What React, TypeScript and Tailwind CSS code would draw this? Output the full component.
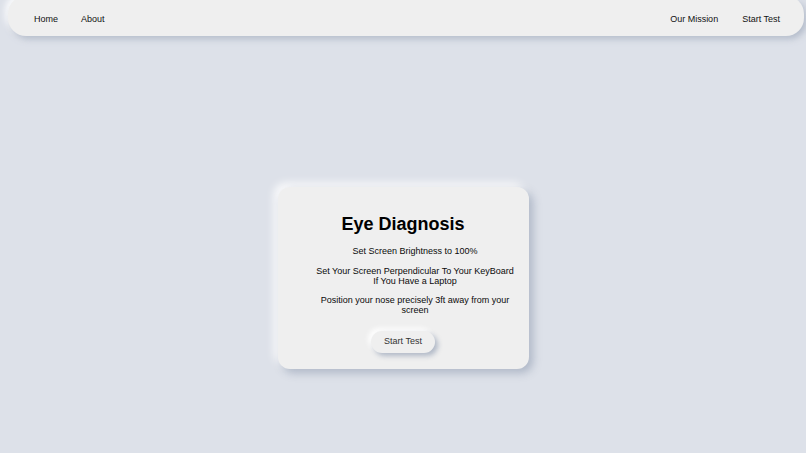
import React from "react";

const NavLink = ({ label }: { label: string }) => (
  <a href="#" className="text-[9px] text-[#111] leading-none">
    {label}
  </a>
);

export default function App() {
  return (
    <div
      className="min-h-screen w-full bg-[#dde1e9] flex flex-col"
      style={{ fontFamily: '"Liberation Sans", Arial, sans-serif' }}
    >
      {/* ナビ */}
      <nav className="ml-[8px] mr-[2px] h-[40px] -mt-[4px] pt-[6px] rounded-[18px] bg-[#efefef] flex items-center justify-between pl-[26px] pr-[24px] shadow-[3px_3px_6px_rgba(163,172,190,0.7),-3px_-3px_6px_rgba(255,255,255,0.9)]">
        <div className="flex items-center gap-[23px]">
          <NavLink label="Home" />
          <NavLink label="About" />
        </div>
        <div className="flex items-center gap-[24px]">
          <NavLink label="Our Mission" />
          <NavLink label="Start Test" />
        </div>
      </nav>

      {/* カード */}
      <main className="flex justify-center pt-[151px]">
        <div className="w-[251px] h-[182px] rounded-[12px] bg-[#efefef] flex flex-col items-center pt-[28px] shadow-[4px_4px_8px_rgba(163,172,190,0.8),-4px_-4px_8px_rgba(255,255,255,0.9)]">
          <h1 className="text-[18px] font-bold text-black leading-[18px]">Eye Diagnosis</h1>
          <div className="mt-[13px] ml-[24px] w-[204px] flex flex-col text-center text-[9px] leading-[10px] text-[#0a0a0a]">
            <p>Set Screen Brightness to 100%</p>
            <p className="mt-[10px]">Set Your Screen Perpendicular To Your KeyBoard If You Have a Laptop</p>
            <p className="mt-[9px]">Position your nose precisely 3ft away from your screen</p>
          </div>
          <button className="mt-[16px] h-[22px] px-[13px] rounded-full bg-[#efefef] text-[9px] text-[#333] shadow-[3px_3px_5px_rgba(163,172,190,0.8),-3px_-3px_5px_rgba(255,255,255,0.9)]">
            Start Test
          </button>
        </div>
      </main>
    </div>
  );
}
